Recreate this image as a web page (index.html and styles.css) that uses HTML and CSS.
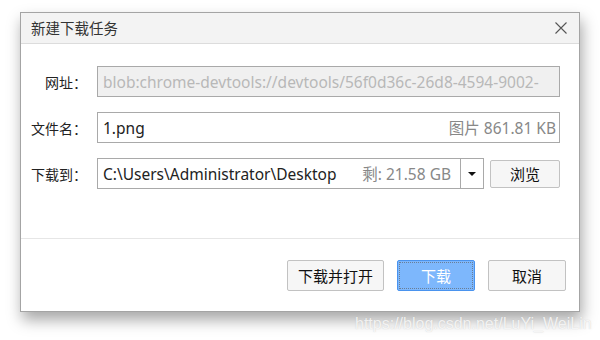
FILE: index.html
```html
<!DOCTYPE html>
<html lang="zh-CN">
<head>
  <meta charset="UTF-8" />
  <title>新建下载任务</title>
  <link rel="stylesheet" href="styles.css">
</head>
<body>
  <div class="dialog">
    <div class="title-bar">
      <span class="title">新建下载任务</span>
      <svg class="close" width="12" height="12" viewBox="0 0 12 12">
        <path d="M0.5 0.5 L11.5 11.5 M11.5 0.5 L0.5 11.5" stroke="#555" stroke-width="1.1" fill="none" />
      </svg>
    </div>

    <div class="form">
      <label class="label">网址：</label>
      <div class="field disabled">
        <span class="value">blob:chrome-devtools://devtools/56f0d36c-26d8-4594-9002-</span>
      </div>

      <label class="label">文件名：</label>
      <div class="field">
        <span class="value">1.png</span>
        <span class="hint">图片 861.81 KB</span>
      </div>

      <label class="label">下载到：</label>
      <div class="path-row">
        <div class="field path">
          <span class="value">C:\Users\Administrator\Desktop</span>
          <span class="hint">剩: 21.58 GB</span>
          <span class="drop"><span class="arrow"></span></span>
        </div>
        <button class="btn browse">浏览</button>
      </div>
    </div>

    <div class="footer">
      <button class="btn">下载并打开</button>
      <button class="btn primary">下载</button>
      <button class="btn">取消</button>
    </div>
  </div>

  <div class="watermark">https://blog.csdn.net/LuYi_WeiLin</div>
</body>
</html>
```

FILE: styles.css
```css
body {
  margin: 0;
  background: #fff;
  font-family: "Noto Sans", "Noto Sans CJK SC", sans-serif;
  color: #222;
  position: relative;
  width: 600px;
  height: 340px;
  overflow: hidden;
}

.dialog {
  margin: 12px 0 0 20px;
  width: 558px;
  height: 298px;
  border: 1px solid #a4a4a4;
  background: #fff;
  box-shadow: 2px 8px 14px rgba(0, 0, 0, 0.35);
  display: flex;
  flex-direction: column;
}

.title-bar {
  height: 30px;
  background: #f3f3f3;
  border-bottom: 1px solid #dcdcdc;
  display: flex;
  align-items: center;
  justify-content: space-between;
  padding: 0 12px 0 10px;
}

.title {
  font-family: "Noto Sans CJK SC", sans-serif;
  font-size: 14.5px;
  color: #333;
  line-height: 20px;
}

.close {
  display: block;
}

.form {
  display: grid;
  grid-template-columns: 66px 1fr;
  column-gap: 10px;
  row-gap: 15px;
  align-items: center;
  padding: 22px 19px 0 0;
  height: 195px;
  box-sizing: border-box;
  border-bottom: 1px solid #e6e6e6;
  align-content: start;
}

.label {
  text-align: right;
  font-family: "Noto Sans CJK SC", sans-serif;
  font-size: 14px;
  color: #222;
  line-height: 20px;
  white-space: nowrap;
}

.field {
  height: 29px;
  border: 1px solid #a9a9a9;
  display: flex;
  align-items: center;
  padding: 0 3px 0 5px;
  font-size: 15.5px;
  line-height: 20px;
  white-space: nowrap;
  overflow: hidden;
}

.field .value {
  flex: 1;
  color: #222;
  overflow: hidden;
}

.field .hint {
  color: #888;
}

.field.disabled {
  background: #f0f0f0;
}

.field.disabled .value {
  color: #b8b8b8;
}

.path-row {
  display: flex;
  align-items: center;
  gap: 6px;
}

.field.path {
  flex: 1;
  padding-right: 0;
}

.field.path .hint {
  margin-right: 9px;
}

.drop {
  width: 22px;
  height: 29px;
  border-left: 1px solid #a9a9a9;
  display: flex;
  align-items: center;
  justify-content: center;
}

.arrow {
  width: 0;
  height: 0;
  border-left: 4px solid transparent;
  border-right: 4px solid transparent;
  border-top: 4px solid #111;
}

.btn {
  font-family: "Noto Sans CJK SC", sans-serif;
  font-size: 15px;
  color: #111;
  background: #f6f6f6;
  border: 1px solid #c2c2c2;
  border-radius: 2px;
  height: 30px;
  padding: 0;
  position: relative;
}

.btn.browse {
  width: 70px;
  height: 28px;
}

.footer {
  flex: 1;
  display: flex;
  justify-content: flex-end;
  align-items: center;
  gap: 13px;
  padding-right: 13px;
}

.footer .btn {
  width: 78px;
  height: 31px;
}

.footer .btn:first-child {
  width: 97px;
}

.btn.primary {
  background: #7db7fc;
  border-color: #4a93ee;
  color: #fff;
}

.btn.primary::after {
  content: '';
  position: absolute;
  top: 1px;
  left: 1px;
  right: 1px;
  bottom: 1px;
  border: 1px dotted #6a7e96;
}

.watermark {
  position: absolute;
  left: 355px;
  top: 315px;
  font-family: "Liberation Sans", sans-serif;
  font-size: 16px;
  color: rgba(255, 255, 255, 0.8);
  text-shadow: 0 0 1px rgba(160, 160, 160, 0.5);
}
```
